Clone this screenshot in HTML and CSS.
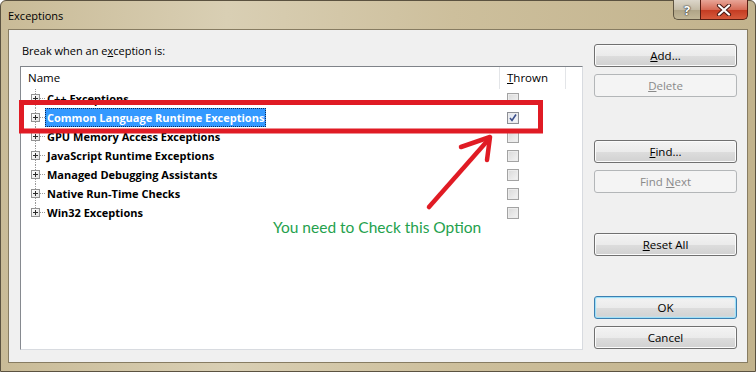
FILE: index.html
```html
<!DOCTYPE html>
<html lang="en">
<head>
  <meta charset="UTF-8">
  <title>Exceptions</title>
  <link rel="stylesheet" href="styles.css">
</head>
<body>

  <!-- Dialog window -->
  <div class="window">

    <!-- Title bar -->
    <div class="titlebar">
      <span class="title">Exceptions</span>
      <div class="caption">
        <span class="cap help">?</span>
        <span class="cap close">
          <svg width="16" height="12" viewBox="0 0 16 12">
            <path d="M3 1.5 L13 10.5 M13 1.5 L3 10.5" stroke="#4a1a14" stroke-width="4.2" stroke-linecap="round"/>
            <path d="M3 1.5 L13 10.5 M13 1.5 L3 10.5" stroke="#fff" stroke-width="2.2" stroke-linecap="round"/>
          </svg>
        </span>
      </div>
    </div>

    <!-- Client area -->
    <div class="client">
      <div class="main">
        <p class="prompt">Break when an e<u>x</u>ception is:</p>
        <div class="list">
          <div class="list-head">
            <span class="col-name">Name</span>
            <span class="col-thrown"><u>T</u>hrown</span>
            <span class="col-rest"></span>
          </div>
          <div class="tree">
            <div class="row">
              <div class="node"><span class="twig"><span class="plus"></span></span><span class="stub"></span><span class="label">C++ Exceptions</span></div>
              <div class="check-cell"><span class="box"></span></div>
            </div>
            <div class="row">
              <div class="node"><span class="twig"><span class="plus"></span></span><span class="stub"></span><span class="label selected">Common Language Runtime Exceptions</span></div>
              <div class="check-cell">
                <span class="box checked">
                  <svg width="10" height="10" viewBox="0 0 10 10"><path d="M2 5 L4 7.5 L8 1.5" fill="none" stroke="#3b4f8a" stroke-width="1.6"/></svg>
                </span>
              </div>
            </div>
            <div class="row">
              <div class="node"><span class="twig"><span class="plus"></span></span><span class="stub"></span><span class="label">GPU Memory Access Exceptions</span></div>
              <div class="check-cell"><span class="box"></span></div>
            </div>
            <div class="row">
              <div class="node"><span class="twig"><span class="plus"></span></span><span class="stub"></span><span class="label">JavaScript Runtime Exceptions</span></div>
              <div class="check-cell"><span class="box"></span></div>
            </div>
            <div class="row">
              <div class="node"><span class="twig"><span class="plus"></span></span><span class="stub"></span><span class="label">Managed Debugging Assistants</span></div>
              <div class="check-cell"><span class="box"></span></div>
            </div>
            <div class="row">
              <div class="node"><span class="twig"><span class="plus"></span></span><span class="stub"></span><span class="label">Native Run-Time Checks</span></div>
              <div class="check-cell"><span class="box"></span></div>
            </div>
            <div class="row last">
              <div class="node"><span class="twig"><span class="plus"></span></span><span class="stub"></span><span class="label">Win32 Exceptions</span></div>
              <div class="check-cell"><span class="box"></span></div>
            </div>
          </div>
        </div>
      </div>

      <!-- Buttons column -->
      <div class="side">
        <button class="btn btn-add"><u>A</u>dd...</button>
        <button class="btn btn-gap-s" disabled><u>D</u>elete</button>
        <button class="btn btn-gap-l"><u>F</u>ind...</button>
        <button class="btn btn-gap-s" disabled>Find <u>N</u>ext</button>
        <button class="btn btn-gap-m"><u>R</u>eset All</button>
        <button class="btn btn-gap-m btn-default">OK</button>
        <button class="btn btn-gap-s">Cancel</button>
      </div>
    </div>

    <!-- Red markup drawn over the screenshot -->
    <svg class="markup" width="756" height="372" viewBox="0 0 756 372">
      <rect x="21.5" y="102.5" width="519" height="28.5" fill="none" stroke="#e01b24" stroke-width="5"/>
      <path d="M429 207 L489 139" fill="none" stroke="#e01b24" stroke-width="4.5" stroke-linecap="round"/>
      <path d="M461 147 L490 137 L487 160" fill="none" stroke="#e01b24" stroke-width="4.5" stroke-linecap="round" stroke-linejoin="round"/>
    </svg>
    <p class="note">You need to Check this Option</p>
  </div>

</body>
</html>
```

FILE: styles.css
```css
/* Reset */
* {
  margin: 0;
  padding: 0;
  box-sizing: border-box;
}

body {
  width: 756px;
  height: 372px;
  overflow: hidden;
  font-family: "Open Sans", "Noto Sans", sans-serif;
  font-size: 11px;
  color: #000;
  background: #fff;
}

/* Window frame */
.window {
  position: relative;
  width: 756px;
  height: 372px;
  display: flex;
  flex-direction: column;
  border: 1px solid #5b5240;
  border-radius: 6px 6px 0 0;
  background: linear-gradient(to right, #c9bb97 0%, #d9cfb4 30%, #cdbf9c 60%, #c2b38d 100%);
}

.titlebar {
  height: 28px;
  display: flex;
  align-items: flex-start;
}

.title {
  padding: 7px 0 0 7px;
  font-size: 11px;
}

.caption {
  margin-left: auto;
  margin-right: 7px;
  margin-top: -1px;
  display: flex;
}

.cap {
  height: 20px;
  display: flex;
  align-items: center;
  justify-content: center;
  border: 1px solid #5e5441;
  border-top: none;
}

.help {
  width: 27px;
  border-radius: 0 0 0 5px;
  border-right: none;
  background: linear-gradient(#dcd6ca 0%, #c4bba6 50%, #aea386 51%, #c2b797 100%);
  color: #fff;
  font-weight: 700;
  font-size: 13px;
  text-shadow: 0 0 1px #333, 0 0 1px #333, 0 0 2px #555;
}

.close {
  width: 48px;
  border-radius: 0 0 5px 0;
  border-color: #5a1d12;
  background: linear-gradient(#e8a597 0%, #d66c57 50%, #c33a21 51%, #d65a3c 100%);
}

/* Client area */
.client {
  height: 334px;
  margin: 0 7px;
  display: flex;
  padding: 13px 10px 12px 11px;
  border: 1px solid #877c62;
  background: #f0f0f0;
}

.main {
  width: 563px;
  display: flex;
  flex-direction: column;
}

.prompt {
  height: 16px;
  line-height: 16px;
  padding-left: 2px;
  margin-bottom: 7px;
  font-size: 11px;
}

/* List view */
.list {
  height: 284px;
  background: #fff;
  border: 1px solid #d8dbe0;
  border-top-color: #7f8389;
  border-left-color: #868a90;
}

.list-head {
  height: 22px;
  display: flex;
  line-height: 21px;
  font-size: 11.5px;
}

.col-name {
  width: 479px;
  padding-left: 7px;
  border-right: 1px solid #e3e5e8;
}

.col-thrown {
  width: 66px;
  padding-left: 7px;
  border-right: 1px solid #e3e5e8;
}

.col-rest {
  flex: 1;
}

.row {
  height: 19px;
  display: flex;
}

.node {
  width: 479px;
  display: flex;
  align-items: center;
}

/* Tree connector lines */
.twig {
  width: 9px;
  height: 19px;
  margin-left: 10px;
  display: flex;
  align-items: center;
  background: repeating-linear-gradient(to bottom, #9a9a9a 0 1px, transparent 1px 2px) no-repeat 4px 0 / 1px 100%;
}

.row.last .twig {
  background-size: 1px 50%;
}

.plus {
  position: relative;
  width: 9px;
  height: 9px;
  border: 1px solid #929292;
  background: linear-gradient(135deg, #fff 0%, #e2e2e2 100%);
}

.plus::before,
.plus::after {
  content: "";
  position: absolute;
  background: #2b2b2b;
}

.plus::before {
  left: 1px;
  top: 3px;
  width: 5px;
  height: 1px;
}

.plus::after {
  left: 3px;
  top: 1px;
  width: 1px;
  height: 5px;
}

.stub {
  width: 5px;
  height: 1px;
  background: repeating-linear-gradient(to right, #9a9a9a 0 1px, transparent 1px 2px);
}

.label {
  padding: 1px 2px 0;
  line-height: 18px;
  font-weight: 700;
  font-size: 11px;
  white-space: nowrap;
}

.label.selected {
  background: #3399ff;
  color: #fff;
  outline: 1px dotted #0c2b5a;
  outline-offset: -1px;
}

.check-cell {
  width: 66px;
  padding-left: 7px;
  display: flex;
  align-items: center;
}

.box {
  width: 12px;
  height: 12px;
  display: flex;
  align-items: center;
  justify-content: center;
  border: 1px solid #a3a3a3;
  background: linear-gradient(135deg, #d9d9d9 0%, #f4f4f4 100%);
  box-shadow: inset 0 0 0 1px #ececec;
}

.box.checked {
  border-color: #8d8f96;
  background: linear-gradient(135deg, #dfe4ee 0%, #f7f8fb 100%);
}

/* Buttons column */
.side {
  width: 143px;
  margin-left: 11px;
  display: flex;
  flex-direction: column;
}

.btn {
  height: 23px;
  font-family: inherit;
  font-size: 11.5px;
  color: #000;
  border: 1px solid #707070;
  border-radius: 3px;
  background: linear-gradient(#f3f3f3 0%, #ebebeb 50%, #dddddd 51%, #d1d1d1 100%);
  box-shadow: inset 0 0 0 1px #fbfbfb;
}

.btn:disabled {
  color: #8a8a8a;
  border-color: #b3b6b8;
  background: #f4f4f4;
  box-shadow: none;
}

.btn-add {
  margin-top: 1px;
}

.btn-gap-s {
  margin-top: 7px;
}

.btn-gap-m {
  margin-top: 40px;
}

.btn-gap-l {
  margin-top: 43px;
}

.btn-default {
  border-color: #3c7fb1;
  box-shadow: inset 0 0 0 1px #9ee0f8, inset 0 0 2px 1px #c5ecfa;
}

/* Annotation overlay */
.markup {
  position: absolute;
  left: -1px;
  top: -1px;
  pointer-events: none;
}

.note {
  position: absolute;
  left: 272px;
  top: 217px;
  font-family: "Lato", sans-serif;
  font-size: 15.5px;
  color: #24a14d;
}
```
